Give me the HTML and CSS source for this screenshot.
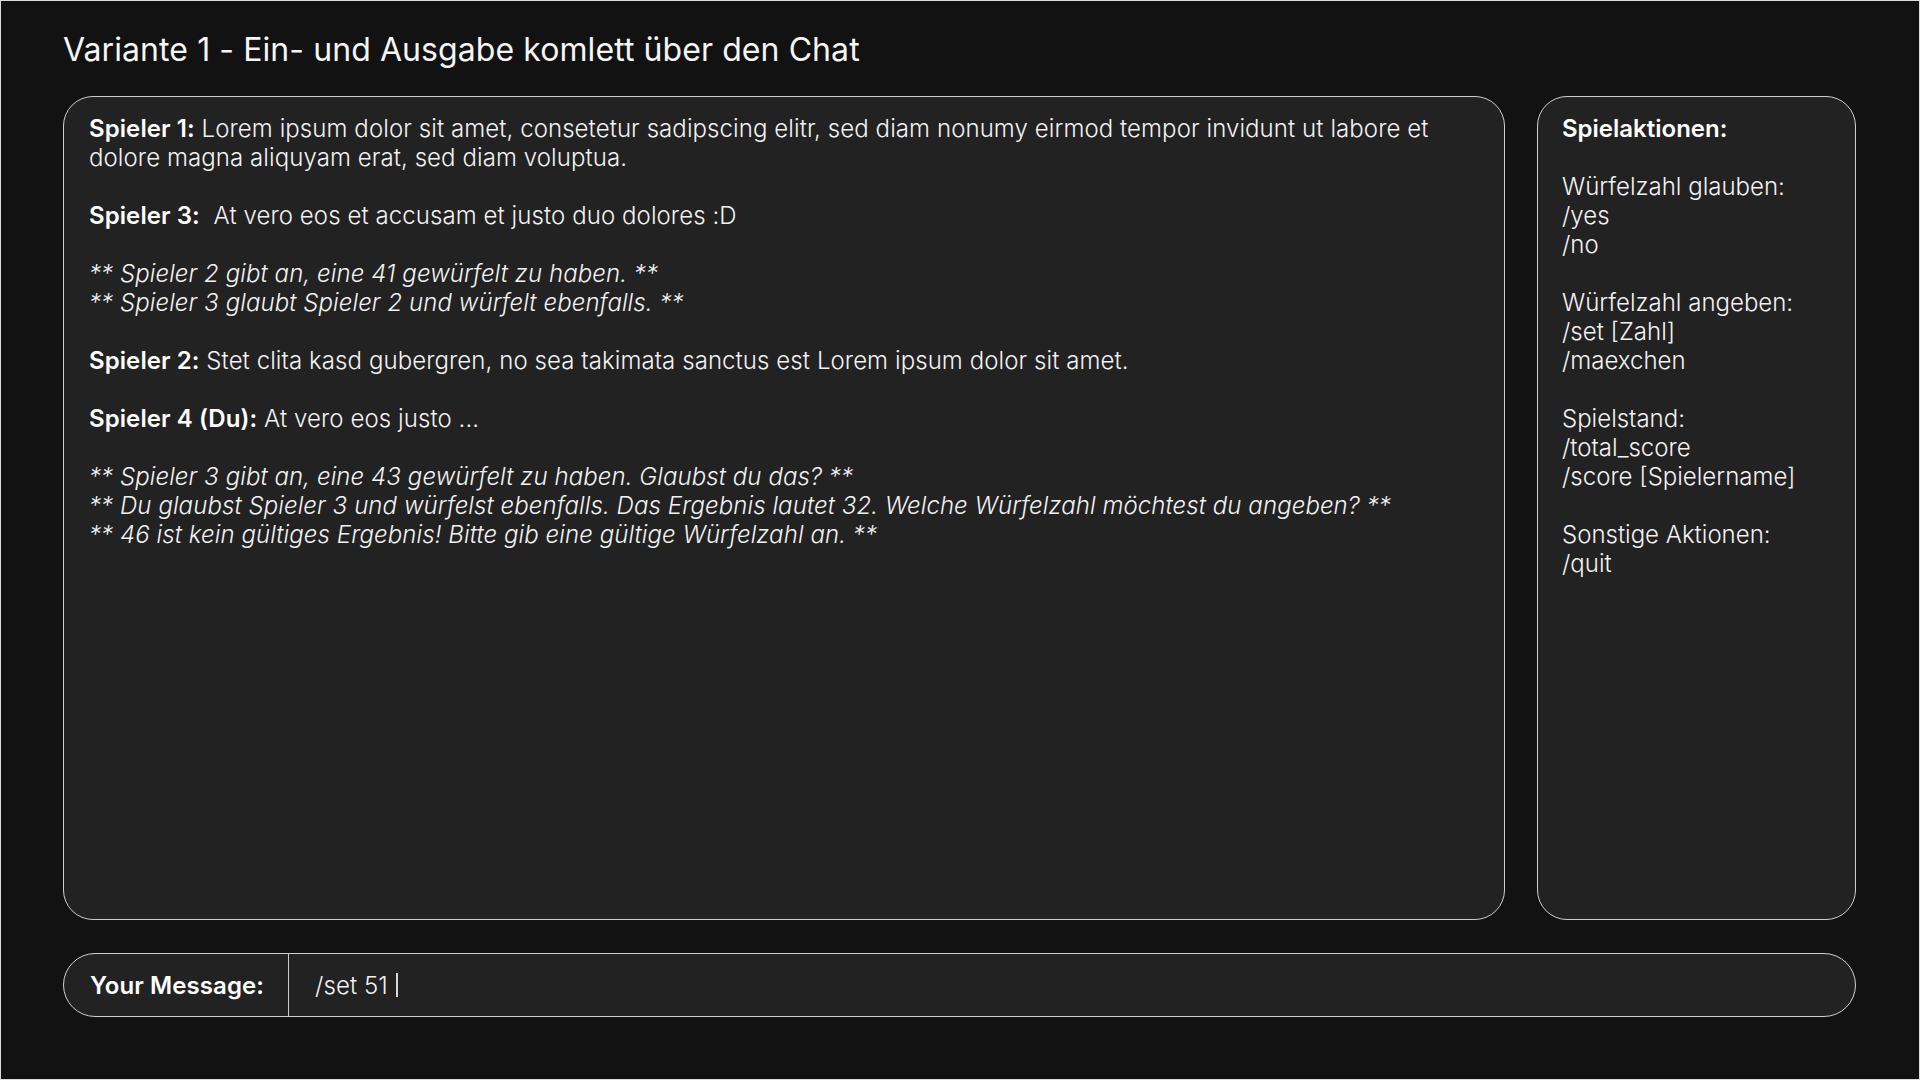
FILE: index.html
```html
<!DOCTYPE html>
<html lang="de">
<head>
<meta charset="utf-8">
<title>Variante 1</title>
<link rel="stylesheet" href="styles.css">
</head>
<body>
<div class="frame">
  <h1 class="title">Variante 1 - Ein- und Ausgabe komlett über den Chat</h1>
  <div class="main">
    <section class="chat">
      <p class="msg"><b>Spieler 1:</b> Lorem ipsum dolor sit amet, consetetur sadipscing elitr, sed diam nonumy eirmod tempor invidunt ut labore et dolore magna aliquyam erat, sed diam voluptua.</p>
      <p class="msg"><b>Spieler 3:</b>&nbsp; At vero eos et accusam et justo duo dolores :D</p>
      <p class="msg sys">** Spieler 2 gibt an, eine 41 gewürfelt zu haben. **<br>** Spieler 3 glaubt Spieler 2 und würfelt ebenfalls. **</p>
      <p class="msg"><b>Spieler 2:</b> Stet clita kasd gubergren, no sea takimata sanctus est Lorem ipsum dolor sit amet.</p>
      <p class="msg"><b>Spieler 4 (Du):</b> At vero eos justo ...</p>
      <p class="msg sys">** Spieler 3 gibt an, eine 43 gewürfelt zu haben. Glaubst du das? **<br>** Du glaubst Spieler 3 und würfelst ebenfalls. Das Ergebnis lautet 32. Welche Würfelzahl möchtest du angeben? **<br>** 46 ist kein gültiges Ergebnis! Bitte gib eine gültige Würfelzahl an. **</p>
    </section>
    <aside class="actions">
      <p class="group"><b>Spielaktionen:</b></p>
      <p class="group">Würfelzahl glauben:<br>/yes<br>/no</p>
      <p class="group">Würfelzahl angeben:<br>/set [Zahl]<br>/maexchen</p>
      <p class="group">Spielstand:<br>/total_score<br>/score [Spielername]</p>
      <p class="group">Sonstige Aktionen:<br>/quit</p>
    </aside>
  </div>
  <div class="input">
    <div class="label">Your Message:</div>
    <div class="field"><span class="value">/set 51 </span><span class="caret"></span></div>
  </div>
</div>
</body>
</html>
```

FILE: styles.css
```css
html, body {
  margin: 0;
  padding: 0;
  background: #121212;
}

.frame {
  box-sizing: border-box;
  width: 1920px;
  height: 1080px;
  border: 1px solid #dcdcdc;
  background: #121212;
  padding: 29px 63px 0 62px;
  display: flex;
  flex-direction: column;
  font-family: "Inter", "Noto Sans", sans-serif;
  color: #f2f2f2;
  letter-spacing: 0.08px;
}

.title {
  margin: 0;
  font-size: 32px;
  font-weight: 400;
  line-height: 39px;
  height: 39px;
  color: #f5f5f5;
}

.main {
  margin-top: 27px;
  display: flex;
  gap: 32px;
  height: 824px;
}

.chat,
.actions {
  box-sizing: border-box;
  background: #222222;
  border: 1px solid #cfcfcf;
  border-radius: 30px;
  font-size: 24px;
  line-height: 29px;
  font-weight: 300;
  padding: 17px 24px 17px 25px;
}

.chat {
  flex: 1;
}

.actions {
  width: 319px;
  flex: none;
  padding-left: 24px;
  letter-spacing: 0;
}

.msg,
.group {
  margin: 0 0 29px 0;
}

b {
  font-weight: 600;
  color: #ffffff;
}

.sys {
  font-style: italic;
}

.input {
  margin-top: 33px;
  box-sizing: border-box;
  height: 64px;
  display: flex;
  align-items: stretch;
  background: #222222;
  border: 1px solid #cfcfcf;
  border-radius: 32px;
  font-size: 24px;
  line-height: 29px;
}

.label {
  box-sizing: border-box;
  width: 225px;
  flex: none;
  display: flex;
  align-items: center;
  padding-left: 26px;
  white-space: nowrap;
  font-weight: 600;
  color: #ffffff;
  border-right: 1px solid #cfcfcf;
}

.field {
  flex: 1;
  display: flex;
  align-items: center;
  padding-left: 26px;
  font-weight: 300;
  white-space: pre;
}

.caret {
  display: inline-block;
  width: 2px;
  height: 24px;
  background: #d8d8d8;
  margin-left: 1px;
}
```
